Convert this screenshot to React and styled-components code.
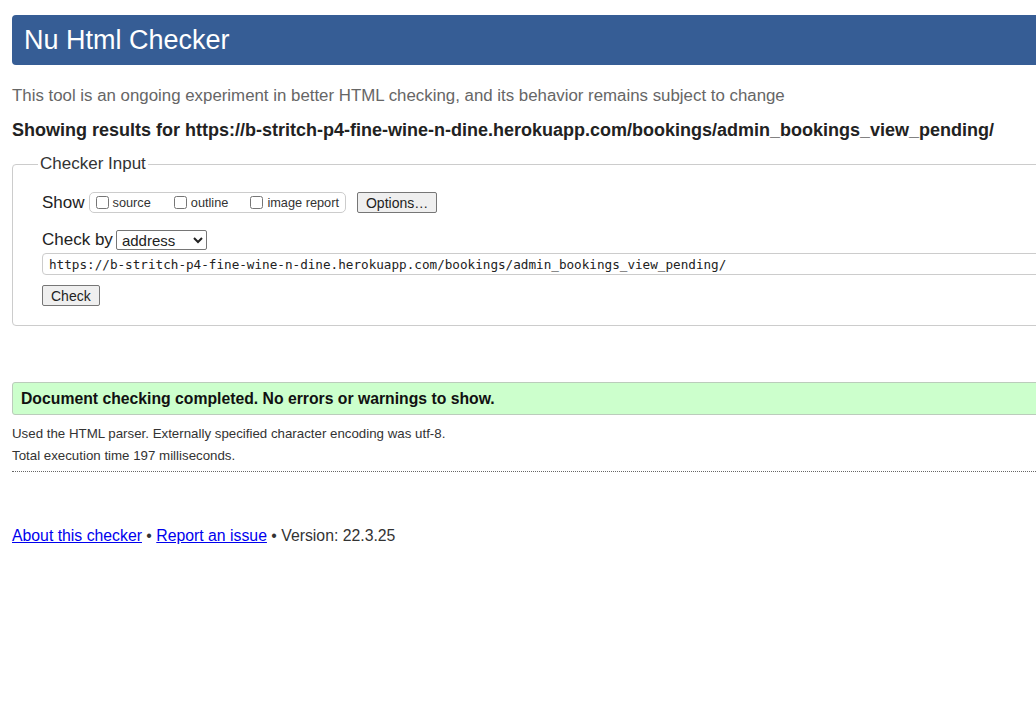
import React from "react";
import styled, { createGlobalStyle } from "styled-components";

const GlobalStyle = createGlobalStyle`
  html, body {
    margin: 0;
    padding: 0;
    overflow: hidden;
    background: white;
  }
  body {
    font-family: "Liberation Sans", Arial, sans-serif;
    color: #222;
  }
`;

const Page = styled.div`
  width: 1100px;
  padding: 15px 12px 0;
`;

const Header = styled.h1`
  margin: 0;
  height: 50px;
  display: flex;
  align-items: center;
  padding: 0 12px;
  background: #365d95;
  color: white;
  font-size: 27px;
  font-weight: normal;
  border-radius: 4px;
`;

const Intro = styled.p`
  margin: 21px 0 0;
  font-size: 16.85px;
  color: #666;
  line-height: 20px;
`;

const Results = styled.p`
  margin: 14px 0 0;
  font-size: 18px;
  font-weight: bold;
  line-height: 20px;
  color: #222;
`;

const Fieldset = styled.fieldset`
  margin: 14px 0 0;
  padding: 12px 29px 19px;
  border: 1px solid #ccc;
  border-radius: 4px;
`;

const Legend = styled.legend`
  padding: 0 2px;
  margin-left: -4px;
  font-size: 17px;
  color: #333;
`;

const Row = styled.div`
  display: flex;
  align-items: center;
  font-size: 17px;
  color: #222;
  margin-top: ${(p) => p.$top || 0}px;
`;

const Label = styled.span`
  margin-right: ${(p) => p.$gap || 4}px;
`;

const CheckGroup = styled.div`
  display: flex;
  align-items: center;
  height: 19px;
  border: 1px solid #ccc;
  border-radius: 5px;
  padding: 0 6px 0 6px;
  font-size: 12.75px;
  color: #333;
`;

const CheckItem = styled.label`
  display: flex;
  align-items: center;
  margin-right: ${(p) => p.$gap || 0}px;

  input {
    margin: 0 4px 0 0;
    width: 13px;
    height: 13px;
  }
`;

const Button = styled.button`
  font-family: "Liberation Sans", Arial, sans-serif;
  font-size: 14px;
  height: 21px;
  padding: 0 8px;
  margin-left: ${(p) => p.$left || 0}px;
  background: #efefef;
  border: 1px solid #767676;
  border-radius: 2px;
  color: #222;
`;

const Select = styled.select`
  font-family: "Liberation Sans", Arial, sans-serif;
  font-size: 15px;
  width: 91px;
  height: 20px;
  padding: 0 1px;
  border: 1px solid #767676;
  border-radius: 2px;
  background: white;
  color: #222;
`;

const UrlInput = styled.input`
  display: block;
  box-sizing: border-box;
  width: 1200px;
  height: 22px;
  margin-top: 3px;
  padding: 0 6px;
  border: 1px solid #ccc;
  border-radius: 4px;
  font-family: "DejaVu Sans Mono", "Liberation Mono", monospace;
  font-size: 12.65px;
  color: #222;
`;

const Success = styled.p`
  margin: 56px 0 0;
  height: 31px;
  display: flex;
  align-items: center;
  padding: 0 8px;
  background: #ccffcc;
  border: 1px solid #bbccbb;
  border-radius: 3px;
  font-size: 15.75px;
  font-weight: bold;
  color: #111;
`;

const Note = styled.p`
  margin: ${(p) => p.$top || 0}px 0 0;
  font-size: 13.3px;
  line-height: 14px;
  color: #333;
`;

const Divider = styled.hr`
  margin: 8px 0 0;
  border: none;
  border-top: 1px dotted #666;
`;

const Footer = styled.p`
  margin: 55px 0 0;
  font-size: 15.8px;
  line-height: 18px;
  color: #333;

  a {
    color: #0000ee;
    text-decoration: underline;
  }
`;

const url =
  "https://b-stritch-p4-fine-wine-n-dine.herokuapp.com/bookings/admin_bookings_view_pending/";

export default function App() {
  return (
    <>
      <GlobalStyle />
      <Page>
        <Header>Nu Html Checker</Header>
        <Intro>
          This tool is an ongoing experiment in better HTML checking, and its
          behavior remains subject to change
        </Intro>
        <Results>Showing results for {url}</Results>

        <Fieldset>
          <Legend>Checker Input</Legend>
          <Row $top={6}>
            <Label>Show</Label>
            <CheckGroup>
              <CheckItem $gap={23}>
                <input type="checkbox" />
                source
              </CheckItem>
              <CheckItem $gap={22}>
                <input type="checkbox" />
                outline
              </CheckItem>
              <CheckItem>
                <input type="checkbox" />
                image report
              </CheckItem>
            </CheckGroup>
            <Button $left={11}>Options…</Button>
          </Row>
          <Row $top={17}>
            <Label $gap={3}>Check by</Label>
            <Select defaultValue="address">
              <option value="address">address</option>
              <option value="upload">file upload</option>
              <option value="text">text input</option>
            </Select>
          </Row>
          <UrlInput type="text" defaultValue={url} />
          <Row $top={10}>
            <Button>Check</Button>
          </Row>
        </Fieldset>

        <Success>
          Document checking completed. No errors or warnings to show.
        </Success>
        <Note $top={12}>
          Used the HTML parser. Externally specified character encoding was
          utf-8.
        </Note>
        <Note $top={8}>Total execution time 197 milliseconds.</Note>
        <Divider />

        <Footer>
          <a href="#about">About this checker</a> •{" "}
          <a href="#issue">Report an issue</a> • Version: 22.3.25
        </Footer>
      </Page>
    </>
  );
}
